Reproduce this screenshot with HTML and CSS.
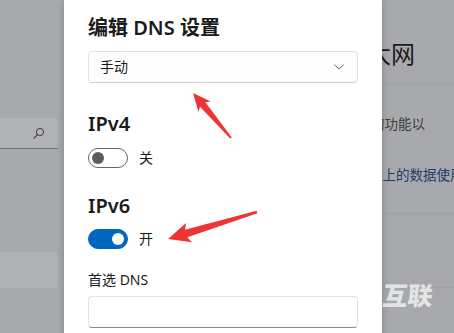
FILE: index.html
```html
<!DOCTYPE html>
<html lang="zh-CN">
<head>
  <meta charset="UTF-8" />
  <meta name="viewport" content="width=device-width, initial-scale=1.0"/>
  <title>编辑 DNS 设置</title>
  <link rel="stylesheet" href="styles.css">
</head>
<body>
  <div class="page">
    <aside class="sidebar">
      <div class="search">
        <svg class="search-icon" width="12" height="14" viewBox="0 0 12 14">
          <circle cx="7" cy="5" r="3.6" fill="none" stroke="#3a3a3a" stroke-width="1"/>
          <line x1="4.4" y1="7.6" x2="1" y2="11.2" stroke="#3a3a3a" stroke-width="1.2" stroke-linecap="round"/>
        </svg>
      </div>
      <div class="nav-item"></div>
    </aside>

    <main class="content">
      <h1 class="page-title">以太网</h1>
      <div class="divider"></div>
      <p class="desc">应用的功能以</p>
      <p class="link">此网络上的数据使用量</p>
      <div class="divider gap-a"></div>
      <div class="divider gap-b"></div>
    </main>
  </div>

  <div class="dialog">
    <h2 class="dialog-title">编辑 DNS 设置</h2>
    <div class="select">
      <span>手动</span>
      <svg width="10" height="6" viewBox="0 0 10 6">
        <polyline points="0.5,0.8 5,5 9.5,0.8" fill="none" stroke="#5c5c5c" stroke-width="1"/>
      </svg>
    </div>

    <h3 class="section">IPv4</h3>
    <div class="toggle-row">
      <div class="toggle"><span class="knob"></span></div>
      <span>关</span>
    </div>

    <h3 class="section second">IPv6</h3>
    <div class="toggle-row">
      <div class="toggle on"><span class="knob"></span></div>
      <span>开</span>
    </div>

    <label class="field-label">首选 DNS</label>
    <div class="input"></div>
  </div>

  <svg class="marks" width="454" height="333" viewBox="0 0 454 333">
    <polygon fill="#ef3434" points="193,93 210.7,101.6 205.4,102.2 231.8,137.4 230.2,138.6 200,106.8 198.5,112"/>
    <polygon fill="#ef3434" points="168,239 191.9,242.2 187.4,237.3 257.4,213.2 256.6,210.8 185,229.7 186.1,223"/>
  </svg>

  <div class="watermark">互联</div>
</body>
</html>
```

FILE: styles.css
```css
body {
  margin: 0;
  width: 454px;
  height: 333px;
  overflow: hidden;
  position: relative;
  background: #a8a9ac;
  font-family: "Noto Sans", "Noto Sans CJK SC", sans-serif;
  color: #1b1b1b;
}
.page {
  display: flex;
  height: 333px;
}
.sidebar {
  width: 58px;
  flex-shrink: 0;
  padding-top: 118px;
}
.search {
  height: 30px;
  background: #b2b3b6;
  border-bottom: 1px solid #707174;
  border-radius: 0 4px 0 0;
  display: flex;
  align-items: center;
  justify-content: flex-end;
  padding-right: 13px;
}
.search-icon {
  margin-top: 2px;
}
.nav-item {
  margin-top: 103px;
  height: 36px;
  background: #b0b1b4;
  border-radius: 0 4px 4px 0;
}
.content {
  flex: 1;
  padding: 37px 0 0 285px;
  font-family: "Noto Sans CJK SC", sans-serif;
  white-space: nowrap;
  overflow: hidden;
}
.page-title {
  margin: 0;
  font-size: 24px;
  line-height: 32px;
  font-weight: 400;
  color: #1c1c1c;
}
.divider {
  margin-top: 14px;
  height: 1px;
  background: #a0a1a4;
}
.divider.gap-a {
  margin-top: 29px;
}
.divider.gap-b {
  margin-top: 73px;
}
.desc {
  margin: 29px 0 0 1px;
  font-size: 13.5px;
  line-height: 20px;
  color: #3c3c3c;
}
.link {
  margin: 31px 0 0 -1px;
  font-size: 13.5px;
  line-height: 20px;
  color: #1d3c6e;
}
.dialog {
  position: absolute;
  left: 64px;
  top: 0;
  width: 294px;
  height: 333px;
  padding: 14px 0 0 24px;
  background: #fff;
  box-shadow: 0 0 8px rgba(0, 0, 0, 0.22);
}
.dialog-title {
  margin: 0;
  font-size: 20px;
  line-height: 28px;
  font-weight: 600;
}
.select {
  margin-top: 9px;
  width: 244px;
  height: 30px;
  padding: 0 13px 0 11px;
  border: 1px solid #e2e2e2;
  border-bottom-color: #d2d2d2;
  border-radius: 4px;
  background: #fdfdfd;
  display: flex;
  align-items: center;
  justify-content: space-between;
  font-size: 14px;
  line-height: 20px;
}
.section {
  margin: 27px 0 0;
  font-size: 20px;
  line-height: 28px;
  font-weight: 600;
}
.section.second {
  margin-top: 24px;
}
.toggle-row {
  margin-top: 10px;
  display: flex;
  align-items: center;
  gap: 11px;
  font-size: 14px;
  line-height: 20px;
}
.second + .toggle-row {
  margin-top: 9px;
}
.toggle {
  width: 32px;
  height: 18px;
  padding: 0 3px;
  border: 1px solid #666;
  border-radius: 10px;
  display: flex;
  align-items: center;
}
.knob {
  width: 12px;
  height: 12px;
  border-radius: 50%;
  background: #5c5c5c;
}
.toggle.on {
  background: #0067c0;
  border-color: #0067c0;
  justify-content: flex-end;
}
.toggle.on .knob {
  background: #fff;
}
.field-label {
  display: block;
  margin-top: 21px;
  font-size: 14px;
  line-height: 20px;
}
.input {
  margin-top: 6px;
  width: 268px;
  height: 30px;
  border: 1px solid #e3e3e3;
  border-bottom-color: #8a8a8a;
  border-radius: 4px;
}
.marks {
  position: absolute;
  left: 0;
  top: 0;
}
.watermark {
  position: absolute;
  left: 383px;
  top: 278px;
  font-family: "Noto Sans CJK SC", sans-serif;
  font-size: 25px;
  line-height: 32px;
  font-weight: 900;
  letter-spacing: 0;
  color: rgba(255, 255, 255, 0.7);
  transform: skewX(-6deg);
}
```
